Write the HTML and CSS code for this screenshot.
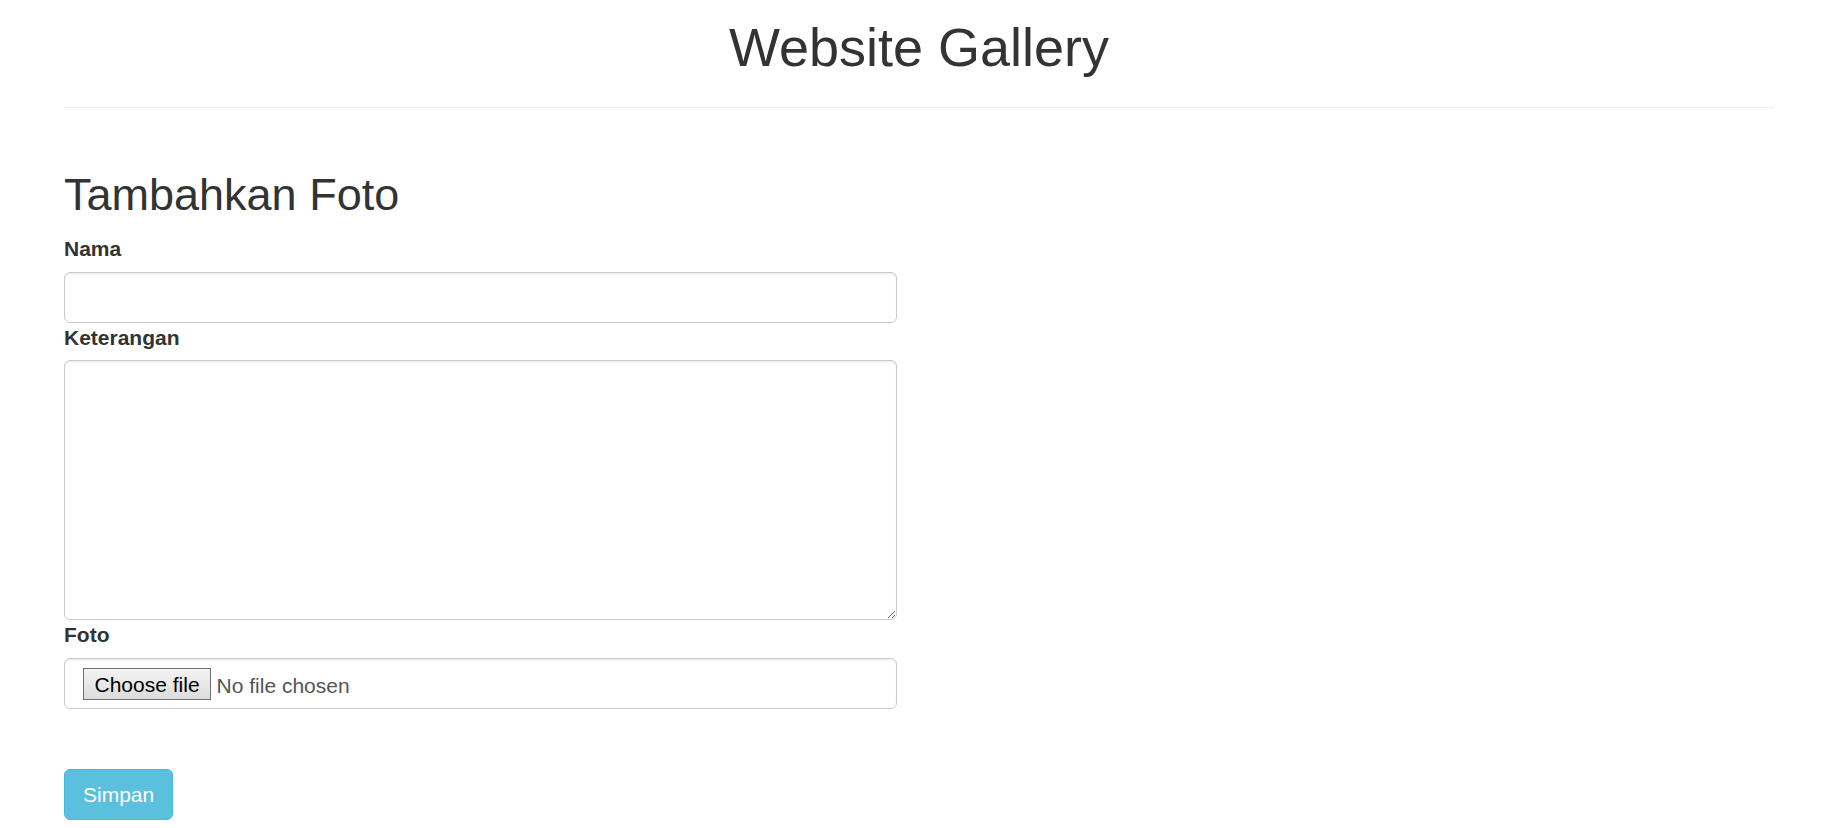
FILE: index.html
```html
<!DOCTYPE html>
<html lang="id">
<head>
<meta charset="utf-8">
<title>Website Gallery</title>
<link rel="stylesheet" href="styles.css">
</head>
<body>
<div class="container">
  <h1 class="site-title">Website Gallery</h1>
  <hr class="divider">
  <div class="form-col">
    <h2 class="form-title">Tambahkan Foto</h2>
    <form class="photo-form">
      <label class="field-label" for="nama">Nama</label>
      <input class="form-control" id="nama" type="text">
      <label class="field-label" for="keterangan">Keterangan</label>
      <textarea class="form-control textarea" id="keterangan"></textarea>
      <label class="field-label" for="foto">Foto</label>
      <div class="form-control file-input">
        <input class="file-hidden" id="foto" type="file">
        <label class="file-btn" for="foto">Choose file</label>
        <span class="file-status">No file chosen</span>
      </div>
      <button class="btn-info" type="button">Simpan</button>
    </form>
  </div>
</div>
</body>
</html>
```
FILE: styles.css
```css
html, body {
  margin: 0;
  padding: 0;
  background: #fff;
}
body {
  font-family: "Liberation Sans", Arial, Helvetica, sans-serif;
  color: #333;
  font-size: 21px;
  line-height: 1.42857;
}
.container {
  padding: 0 57px 0 64px;
}
.site-title {
  margin: 18px 0 0;
  font-size: 54px;
  font-weight: 400;
  line-height: 1.1;
  text-align: center;
  color: #333;
}
.divider {
  margin: 30px 0 30px;
  border: 0;
  border-top: 1px solid #eee;
  height: 0;
}
.form-col {
  display: flow-root;
  width: 833px;
}
.form-title {
  margin: 31.5px 0 15px;
  font-size: 45px;
  font-weight: 400;
  line-height: 1.1;
}
.photo-form {
  display: flex;
  flex-direction: column;
  align-items: flex-start;
}
.field-label {
  display: block;
  font-weight: 700;
  margin-bottom: 7.5px;
  line-height: 30px;
}
.form-control {
  box-sizing: border-box;
  display: block;
  width: 100%;
  height: 51px;
  padding: 9px 18px;
  font-family: inherit;
  font-size: 21px;
  line-height: 30px;
  color: #555;
  background: #fff;
  border: 1.5px solid #ccc;
  border-radius: 6px;
  box-shadow: inset 0 1.5px 1.5px rgba(0, 0, 0, 0.075);
  margin: 0;
}
.textarea {
  height: 260px;
  resize: both;
}
.file-input {
  display: flex;
  align-items: flex-start;
  padding-top: 9px;
  padding-bottom: 9px;
}
.file-hidden {
  display: none;
}
.file-btn {
  box-sizing: border-box;
  height: 32.5px;
  font-size: 21px;
  color: #000;
  padding: 3px 10px 0 10.5px;
  margin: 0 6px 0 0;
  border: 1px solid #707070;
  background: linear-gradient(#f4f4f4, #dcdcdc);
  line-height: 26px;
  white-space: nowrap;
}
.file-status {
  line-height: 35px;
  color: #555;
  white-space: nowrap;
}
.btn-info {
  margin-top: 60.5px;
  box-sizing: border-box;
  height: 51px;
  padding: 9px 18px;
  font-family: inherit;
  font-size: 21px;
  line-height: 30px;
  color: #fff;
  background: #5bc0de;
  border: 1.5px solid #46b8da;
  border-radius: 6px;
  cursor: pointer;
}
```
